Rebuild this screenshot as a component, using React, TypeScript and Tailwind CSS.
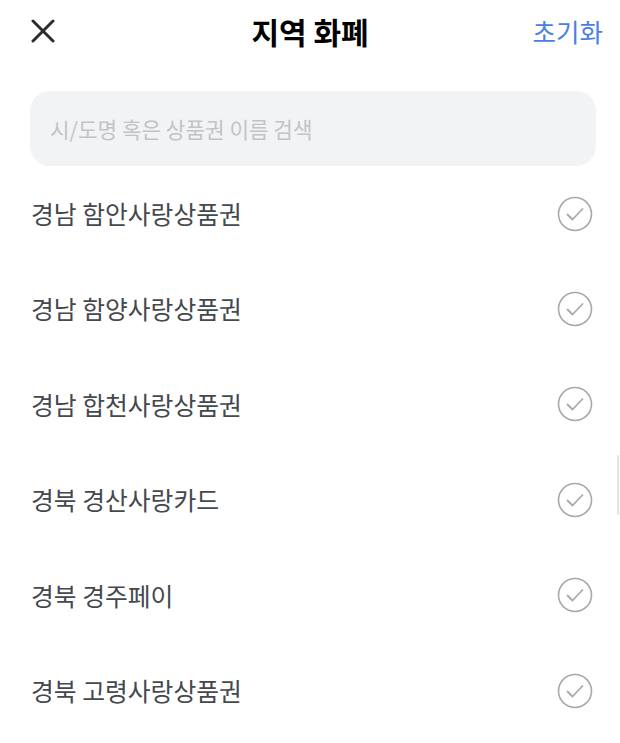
import React from "react";

const regions: string[] = [
  "경남 함안사랑상품권",
  "경남 함양사랑상품권",
  "경남 합천사랑상품권",
  "경북 경산사랑카드",
  "경북 경주페이",
  "경북 고령사랑상품권",
];

function CheckCircle() {
  return (
    <svg width="36" height="36" viewBox="0 0 36 36" fill="none">
      <circle cx="18" cy="18" r="16.5" stroke="#a6a9ae" strokeWidth="1.6" />
      <path d="M10.5 18.5 L15.5 23.5 L25.5 13" stroke="#a6a9ae" strokeWidth="1.8" strokeLinecap="round" strokeLinejoin="round" />
    </svg>
  );
}

export default function App() {
  return (
    <div
      className="relative w-[620px] h-[743px] bg-white overflow-hidden"
      style={{ fontFamily: '"Noto Sans CJK KR", "Noto Sans", sans-serif' }}
    >
      {/* header */}
      <div className="relative flex items-center justify-between h-[62px] pl-[31px] pr-[17px]">
        <svg width="24" height="24" viewBox="0 0 24 24" fill="none">
          <path d="M2 2 L22 22 M22 2 L2 22" stroke="#2b2d31" strokeWidth="3" strokeLinecap="round" />
        </svg>
        <h1 className="absolute left-1/2 -translate-x-1/2 text-[30px] font-bold text-black">지역 화폐</h1>
        <button className="text-[25.5px] text-[#4a80e3]">초기화</button>
      </div>

      {/* search */}
      <div className="pl-[30px] pr-[24px] pt-[29px]">
        <div className="flex items-center h-[75px] rounded-[20px] bg-[#f2f3f5] px-[20px]">
          <span className="text-[21.3px] text-[#c2c3c7]">시/도명 혹은 상품권 이름 검색</span>
        </div>
      </div>

      {/* list */}
      <ul>
        {regions.map((name) => (
          <li key={name} className="flex items-center justify-between h-[95.4px] pl-[31px] pr-[27px]">
            <span className="text-[24.8px] text-[#45484d]">{name}</span>
            <CheckCircle />
          </li>
        ))}
      </ul>

      {/* scrollbar */}
      <div className="absolute right-[1px] top-[455px] w-[2px] h-[60px] rounded-full bg-[#e3e4e6]" />
    </div>
  );
}
